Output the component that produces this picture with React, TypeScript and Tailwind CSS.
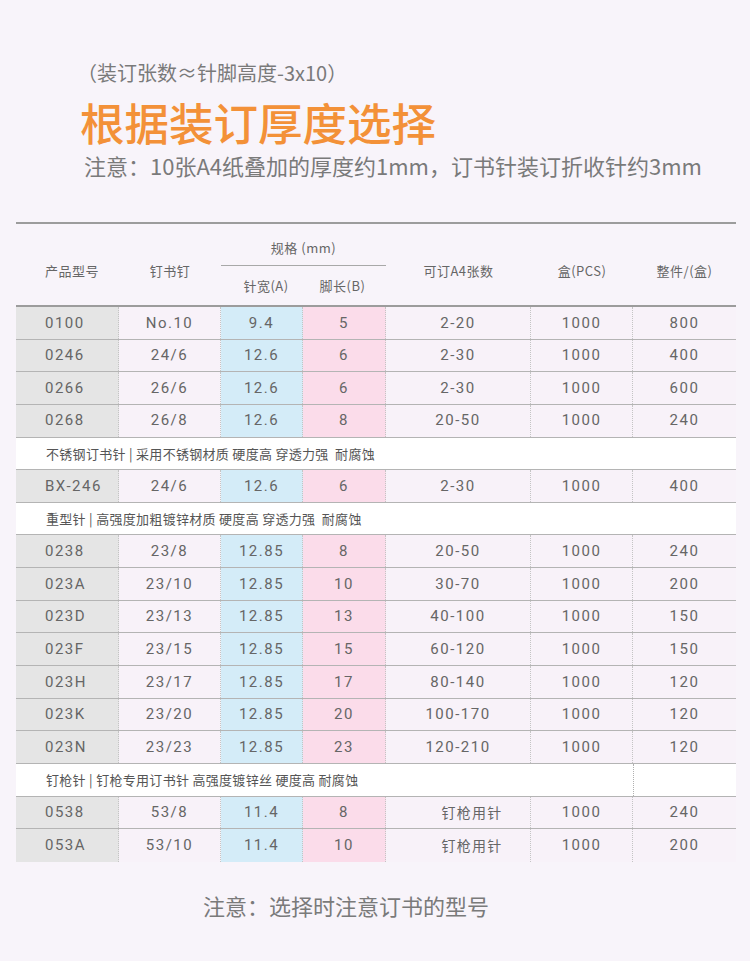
import React from "react";

type Row =
  | { kind: "row"; c: string[] }
  | { kind: "sec"; text: string; split?: boolean };

const rows: Row[] = [
  { kind: "row", c: ["0100", "No.10", "9.4", "5", "2-20", "1000", "800"] },
  { kind: "row", c: ["0246", "24/6", "12.6", "6", "2-30", "1000", "400"] },
  { kind: "row", c: ["0266", "26/6", "12.6", "6", "2-30", "1000", "600"] },
  { kind: "row", c: ["0268", "26/8", "12.6", "8", "20-50", "1000", "240"] },
  { kind: "sec", text: "不锈钢订书针 | 采用不锈钢材质 硬度高 穿透力强  耐腐蚀" },
  { kind: "row", c: ["BX-246", "24/6", "12.6", "6", "2-30", "1000", "400"] },
  { kind: "sec", text: "重型针 | 高强度加粗镀锌材质 硬度高 穿透力强  耐腐蚀" },
  { kind: "row", c: ["0238", "23/8", "12.85", "8", "20-50", "1000", "240"] },
  { kind: "row", c: ["023A", "23/10", "12.85", "10", "30-70", "1000", "200"] },
  { kind: "row", c: ["023D", "23/13", "12.85", "13", "40-100", "1000", "150"] },
  { kind: "row", c: ["023F", "23/15", "12.85", "15", "60-120", "1000", "150"] },
  { kind: "row", c: ["023H", "23/17", "12.85", "17", "80-140", "1000", "120"] },
  { kind: "row", c: ["023K", "23/20", "12.85", "20", "100-170", "1000", "120"] },
  { kind: "row", c: ["023N", "23/23", "12.85", "23", "120-210", "1000", "120"] },
  { kind: "sec", text: "钉枪针 | 钉枪专用订书针 高强度镀锌丝 硬度高 耐腐蚀", split: true },
  { kind: "row", c: ["0538", "53/8", "11.4", "8", "钉枪用针", "1000", "240"] },
  { kind: "row", c: ["053A", "53/10", "11.4", "10", "钉枪用针", "1000", "200"] },
];

const widths = ["w-[103px]", "w-[102px]", "w-[82px]", "w-[83px]", "w-[145px]", "w-[102px]", "w-[103px]"];
const bgs = ["bg-[#e5e5e5]", "bg-[#f8f2f9]", "bg-[#d4ecf8]", "bg-[#fbdcea]", "bg-[#f8f2f9]", "bg-[#f8f2f9]", "bg-[#f8f2f9]"];

export default function App() {
  return (
    <div className="min-h-[961px] w-[750px] bg-[#f8f4fa] font-['Noto_Sans_CJK_SC',sans-serif] text-[#777]">
      <div className="pl-[80px] pt-[59px]">
        <div className="-ml-[3px] text-[20px] leading-[28px] text-[#7a7a7a]">（装订张数≈针脚高度-3x10）</div>
        <div className="mt-[9px] text-[44.5px] leading-[52px] font-medium text-[#f39138]">根据装订厚度选择</div>
        <div className="mt-[2px] pl-[4px] text-[22px] leading-[30px] text-[#7a7a7a]">
          注意：10张A4纸叠加的厚度约1mm，订书针装订折收针约3mm
        </div>
      </div>

      <div className="mt-[42px] ml-[16px] w-[720px]">
        <div className="flex h-[85px] border-t-2 border-b-2 border-[#9c9c9c] text-[13px] text-[#666] tracking-[0.5px]">
          <div className="flex w-[103px] items-center pl-[29px] pt-3">产品型号</div>
          <div className="flex w-[102px] items-center justify-center pt-3">钉书钉</div>
          <div className="flex w-[165px] flex-col">
            <div className="flex h-[42px] items-center justify-center border-b border-[#a8a8a8] pt-[6px]">规格 (mm)</div>
            <div className="flex flex-1">
              <div className="flex w-[82px] items-center justify-center pl-[8px]">针宽(A)</div>
              <div className="flex w-[83px] items-center justify-center pr-[4px]">脚长(B)</div>
            </div>
          </div>
          <div className="flex w-[145px] items-center justify-center pt-3">可订A4张数</div>
          <div className="flex w-[102px] items-center justify-center pt-3">盒(PCS)</div>
          <div className="flex w-[103px] items-center justify-center pt-3">整件/(盒)</div>
        </div>

        {rows.map((r, i) => {
          const last = i === rows.length - 1;
          const bb = last ? "" : "border-b border-[#b4b4b4]";
          if (r.kind === "sec") {
            return (
              <div key={i} className={`flex h-[32.65px] bg-white ${bb}`}>
                <div className="flex flex-1 items-center whitespace-pre pl-[30px] text-[13px] tracking-[0.3px] text-[#555]">
                  {r.text}
                </div>
                {r.split && <div className="w-[103px] border-l border-dotted border-[#b0b0b0]" />}
              </div>
            );
          }
          return (
            <div key={i} className={`flex h-[32.65px] ${bb}`}>
              {r.c.map((t, j) => {
                const cjk = /[\u4e00-\u9fff]/.test(t);
                return (
                  <div
                    key={j}
                    className={`flex items-center ${widths[j]} ${bgs[j]} ${j === 0 ? "pl-[29px]" : "justify-center"} ${
                      j < 6 ? "border-r border-dotted border-[#c4c4c4]" : ""
                    } ${
                      cjk
                        ? "pl-[28px] text-[14px] tracking-[1.2px]"
                        : "font-['Roboto','Noto_Sans_CJK_SC',sans-serif] text-[15px] tracking-[1.5px]"
                    } text-[#666]`}
                  >
                    {t}
                  </div>
                );
              })}
            </div>
          );
        })}
      </div>

      <div className="mt-[28px] pl-[203px] text-[22px] leading-[30px] text-[#7a7a7a]">注意：选择时注意订书的型号</div>
    </div>
  );
}
